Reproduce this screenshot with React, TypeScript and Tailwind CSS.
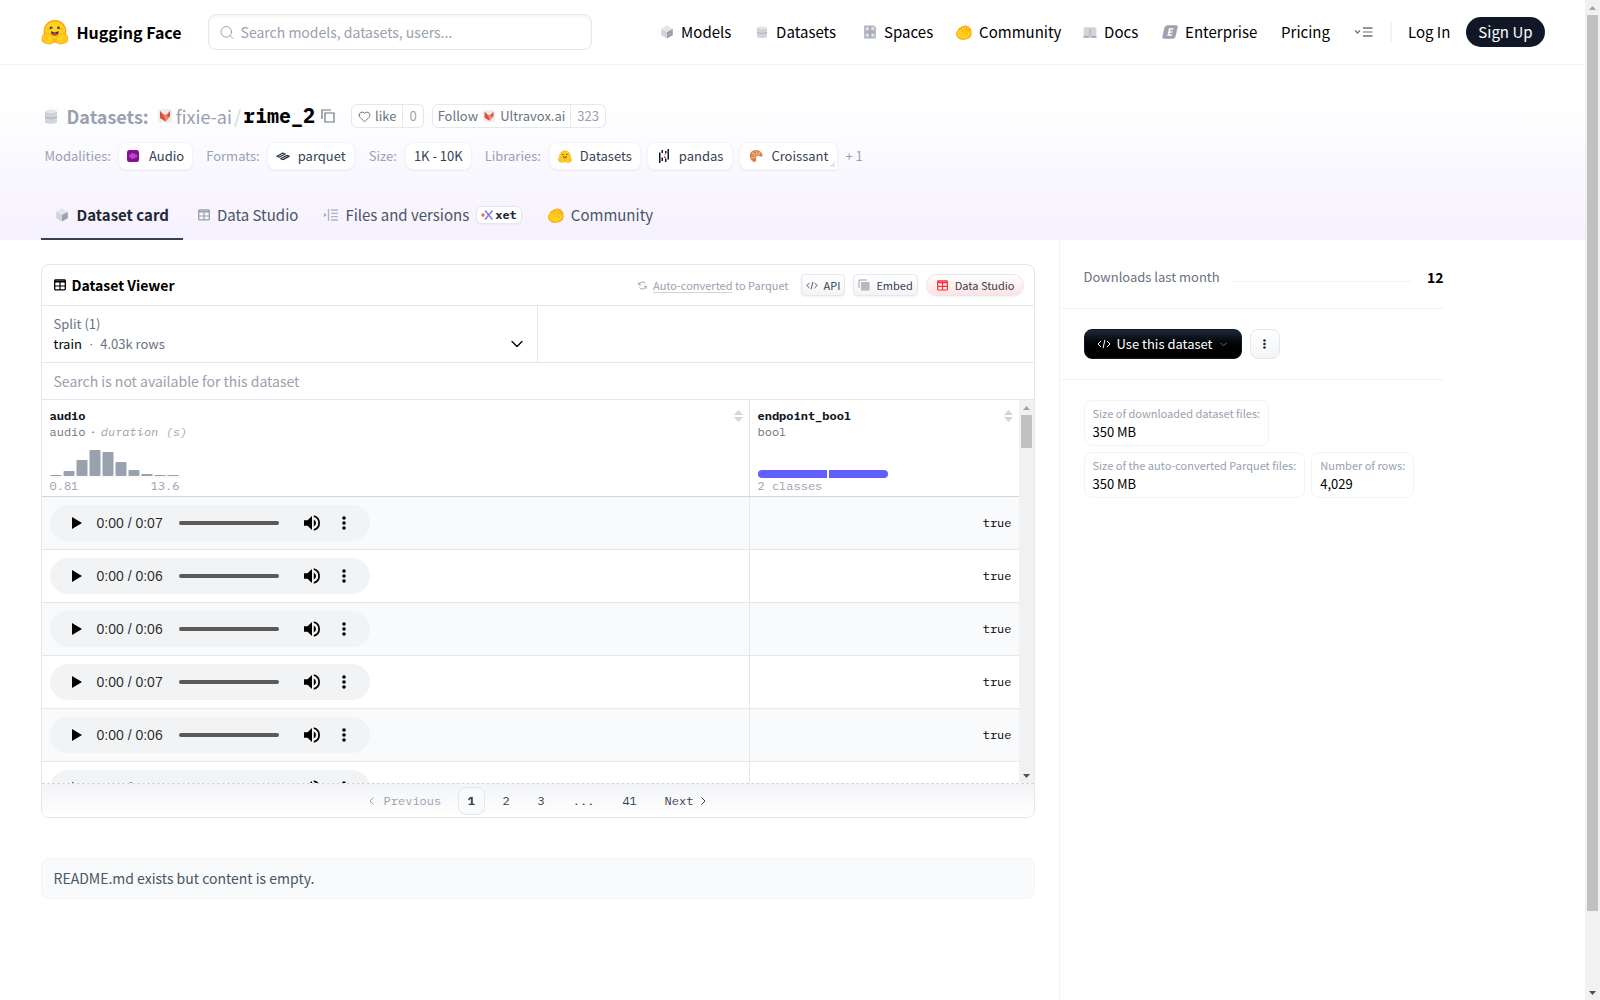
import React from 'react';
import { ChevronDown, Heart, Search } from 'lucide-react';

const MONO = "font-['IBM_Plex_Mono','Liberation_Mono',monospace]";

type IconProps = { className?: string };

const HuggingFace: React.FC<IconProps> = ({ className }) => {
  const hand =
    'M17.5 48c-1.6 0-3 .7-4 1.9a6 6 0 0 0-1.4 3.7 7 7 0 0 0-1.9-.3c-1.6 0-3 .6-4 1.7a5.8 5.8 0 0 0-.8 7 5.3 5.3 0 0 0-1.8 2.8c-.2.9-.5 2.8.8 4.7a5.2 5.2 0 0 0-.4 5c1 2.400 3.600 4.200 8.600 6.100 3 1.300 5.900 2 5.900 2a44 44 0 0 0 10.900 1.600c5.900 0 10-1.800 12.500-5.300 3.900-5.700 3.300-10.900-1.700-15.900-2.800-2.800-4.600-6.900-5-7.800-.8-2.700-2.900-5.600-6.300-5.600a5.700 5.700 0 0 0-4.600 2.500c-1-1.300-2-2.300-2.800-2.800A7.400 7.400 0 0 0 17.500 48Z';
  return (
    <svg className={className} viewBox="0 0 95 88" fill="none">
      <circle cx="47.2" cy="41.8" r="36.5" fill="#FFD21E" stroke="#FF9D0B" strokeWidth="4" />
      <path
        fill="#3A3B45"
        d="M58.5 32.300c1.280.44 1.780 3.060 3.070 2.380a5 5 0 1 0-6.760-2.070c.61 1.150 2.550-.72 3.700-.32ZM34.950 32.300c-1.280.44-1.790 3.060-3.070 2.380a5 5 0 1 1 6.760-2.070c-.61 1.150-2.560-.72-3.700-.32Z"
      />
      <path
        fill="#3A3B45"
        d="M46.960 56.290c9.830 0 13-8.760 13-13.260 0-2.340-1.570-1.600-4.090-.36-2.330 1.150-5.460 2.740-8.900 2.740-7.190 0-13-6.880-13-2.380s3.160 13.260 13 13.260Z"
      />
      <path fill="#F94040" d="M38 53a9.500 9.500 0 0 1 9-5c4 0 7.500 2 9 5-2.300 2.200-5.500 3.300-9 3.300S40.300 55.200 38 53Z" />
      <circle cx="70.700" cy="33.800" r="3.250" fill="#FF9D0B" />
      <circle cx="24.200" cy="33.800" r="3.250" fill="#FF9D0B" />
      <path d={hand} fill="#FFD21E" stroke="#FF9D0B" strokeWidth="3" />
      <path d="M15 56l6 9M9 63l10 8M9 71l8 4" stroke="#FF9D0B" strokeWidth="2" strokeLinecap="round" />
      <g transform="translate(94.400 0) scale(-1 1)">
        <path d={hand} fill="#FFD21E" stroke="#FF9D0B" strokeWidth="3" />
        <path d="M15 56l6 9M9 63l10 8M9 71l8 4" stroke="#FF9D0B" strokeWidth="2" strokeLinecap="round" />
      </g>
    </svg>
  );
};

const Cube: React.FC<IconProps> = ({ className }) => (
  <svg className={className} viewBox="0 0 24 24">
    <path fill="#E2E5EA" d="M12 1l10 5.500-10 5.500L2 6.500z" />
    <path fill="#D1D5DB" d="M2 6.500L12 12v11L2 17.500z" />
    <path fill="#9CA3AF" d="M22 6.500L12 12v11l10-5.500z" />
  </svg>
);

const Cylinder: React.FC<IconProps> = ({ className }) => (
  <svg className={className} viewBox="2 0 20 24">
    <path fill="#D1D5DB" d="M2 4v17q0 3 10 3t10-3V4z" />
    <path fill="none" stroke="#9CA3AF" strokeWidth="1.500" d="M2 12q3 3 10 3t10-3" />
    <ellipse cx="12" cy="4" rx="10" ry="3.500" fill="#E2E5EA" />
    <path fill="none" stroke="#B6BCC8" strokeWidth="1" d="M2 5q3 3 10 3t10-3" />
  </svg>
);

const SpacesIcon: React.FC<IconProps> = ({ className }) => (
  <svg className={className} viewBox="0 0 24 24">
    <path fill="#B1B5C4" d="M2 1h15a5.500 5.500 0 0 1 5 8v14H2z" />
    <g fill="#DDE0E6">
      <rect x="5" y="4" width="5" height="5" rx="1" />
      <circle cx="17" cy="6" r="3" />
      <rect x="5" y="15" width="5" height="5" rx="1" />
      <rect x="14.500" y="15" width="5" height="5" rx="1" />
    </g>
    <path stroke="#9BA1B2" d="M12 1v22M2 12h20" />
  </svg>
);

const Fist: React.FC<IconProps> = ({ className }) => (
  <svg className={className} viewBox="0 0 24 22">
    <path
      fill="#FFD21E"
      stroke="#FF9D0B"
      strokeWidth="1.600"
      strokeLinejoin="round"
      d="M2 17C0 13 1.500 9 4 7.500 3.500 5 6 4 7.500 5.200 7 2.500 10 1.500 11.500 3.500 12 .8 15 .5 16 3c2-1.500 4.300 0 3.800 2.500 2.300 0 3 2 2.200 4 1.500 4 0 8-5 10.500-5 2-12 1.500-15-3z"
    />
    <path
      fill="none"
      stroke="#FF9D0B"
      strokeWidth="1.300"
      strokeLinecap="round"
      d="M7.500 5.200l3 5M11.500 3.500l2.500 5.500M16 3l1 6M19.800 5.500L19 10M13 13c1.500-2 4-2 4.500 1"
    />
  </svg>
);

const Book: React.FC<IconProps> = ({ className }) => (
  <svg className={className} viewBox="0 0 24 22">
    <path fill="#9CA3AF" d="M1 17h22v3h-9l-2-1-2 1H1z" />
    <path fill="#D1D5DB" d="M1 3q7-3 11 0q4-3 11 0v15q-7-2-11 1Q8 16 1 18z" />
    <path stroke="#9CA3AF" strokeWidth="1.500" d="M12 4v13" />
  </svg>
);

const EnterpriseIcon: React.FC<IconProps> = ({ className }) => (
  <svg className={className} viewBox="0 0 24 20">
    <path fill="#9CA3AF" d="M8 0h13q3 0 2.500 3l-3 13q-1 4-4 4H3q-3 0-2.500-3l3-13Q4.500 0 8 0z" />
    <path fill="none" stroke="#fff" strokeWidth="2.400" d="M17 5.500h-5.500l-2 9H15M10.500 10h5" />
  </svg>
);

const MenuIcon: React.FC<IconProps> = ({ className }) => (
  <svg className={className} viewBox="0 0 20 12" fill="none">
    <path stroke="#6B7280" strokeWidth="1.300" d="M1 4.500l2.500 2.500L6 4.500M9 2h9.500M9 10h9.500" />
    <path stroke="#B1B5C4" strokeWidth="2" d="M9 6h9.500" />
  </svg>
);

const Fox: React.FC<IconProps> = ({ className }) => (
  <svg className={className} viewBox="0 0 14 14">
    <rect width="14" height="14" rx="2" fill="#F1EDED" />
    <path fill="#F2876F" d="M2 2l4 3.500h2.500L12 2v6l-4.500 4.500L2 9z" />
    <path fill="#D9503F" d="M2 2l4 5 2 5.500L2 9zM12 2L8.500 7l3.500 1z" />
  </svg>
);

const CopyIcon: React.FC<IconProps> = ({ className }) => (
  <svg className={className} viewBox="0 0 14 14" fill="none" stroke="currentColor" strokeWidth="1.200">
    <path d="M4 4h9v9H4zM1 10V1h9" />
  </svg>
);

const TableIcon: React.FC<IconProps> = ({ className }) => (
  <svg className={className} viewBox="0 0 12 12" fill="none" stroke="currentColor">
    <rect x=".7" y=".9" width="10.600" height="10" rx=".8" strokeWidth="1.300" />
    <path strokeWidth="1.200" d="M6 2.500V11M.8 7h10.500" />
    <path strokeWidth="2" d="M.8 2.500h10.500" />
  </svg>
);

const FilesIcon: React.FC<IconProps> = ({ className }) => (
  <svg className={className} viewBox="0 0 14 12" fill="none">
    <path fill="#9CA3AF" d="M0 4l2.500 2L0 8z" />
    <path stroke="#B1B5C4" strokeWidth="1.300" d="M4.500 0v12M7 1h7M7 4.300h7M7 7.600h7M7 11h7" />
  </svg>
);

const XetIcon: React.FC<IconProps> = ({ className }) => (
  <svg className={className} viewBox="0 0 12 10" fill="none" strokeLinecap="round">
    <path fill="#FF6B4A" d="M0 5l2-2.300L4 5 2 7.300z" />
    <path stroke="#7C6CF5" strokeWidth="1.500" strokeDasharray="2 1" d="M4.500 1L7 4.200h1.500L11 1M4.500 9L7 5.800h1.500L11 9" />
  </svg>
);

const AudioIcon: React.FC<IconProps> = ({ className }) => (
  <svg className={className} viewBox="0 0 12 12">
    <rect width="12" height="12" rx="2.500" fill="#8A0A9A" />
    <path stroke="#E3A6EA" strokeWidth=".9" strokeLinecap="round" d="M3 5v2M5 3.500v5M7 4v4M9 5v2" />
  </svg>
);

const ParquetIcon: React.FC<IconProps> = ({ className }) => (
  <svg className={className} viewBox="0 0 14 10" fill="none" stroke="#27303F" strokeWidth="1.200">
    <path d="M.5 5.500L7 2M3 6.200l6.500-3.400M4.500 7.800L11 4.400M7 8.600l6.500-3.500M.5 5l2.700 1.300M6.500 2l3 1M4.300 7.500L7 8.700M10.800 4.200l2.700 1" />
  </svg>
);

const PandasIcon: React.FC<IconProps> = ({ className }) => (
  <svg className={className} viewBox="0 0 12 14">
    <path fill="#130754" d="M3.500 1h1.500v3H3.500zM3.500 8.500h1.500v3.500H3.500z" />
    <path fill="#111827" d="M1 3.500h1.500V14H1zM9.500 0H11v10.500H9.500zM7 2h1.500v2.500H7zM7 9.500h1.500V13H7z" />
    <path fill="#FFCA00" d="M6 5h1.500v1.500H6z" />
    <path fill="#E70488" d="M6 7.500h1.500V9H6z" />
  </svg>
);

const Croissant: React.FC<IconProps> = ({ className }) => (
  <svg className={className} viewBox="0 0 14 14">
    <path fill="#D9844F" d="M1 8C0 4 3 1 7 1c3 0 6 2 6.500 5 .3 1.500-1 2-2 1.500C10 6.500 7.500 6 7 8c-.3 1.500.5 2.500 0 4-.4 1.300-2 1.300-3 .6C2.300 11.500 1.300 10 1 8z" />
    <path fill="none" stroke="#F4BD83" strokeWidth="1.200" d="M3 3.500l3.500 3M7.500 1.500l.5 4M2 9l4-1M11 3L9.500 6" />
  </svg>
);

const CodeIcon: React.FC<IconProps> = ({ className }) => (
  <svg className={className} viewBox="0 0 14 10" fill="none" stroke="currentColor" strokeWidth="1">
    <path d="M4 2L1 5l3 3M10 2l3 3-3 3M8 .8L6 9.200" />
  </svg>
);

const RefreshIcon: React.FC<IconProps> = ({ className }) => (
  <svg className={className} viewBox="0 0 12 12" fill="none" stroke="currentColor" strokeWidth="1.200">
    <path d="M1.500 5A4.600 4.600 0 0 1 10 3.500M10.500 7A4.600 4.600 0 0 1 2 8.500M1 1.500V5h3M11 10.500V7H8" />
  </svg>
);

const EmbedIcon: React.FC<IconProps> = ({ className }) => (
  <svg className={className} viewBox="0 0 12 12">
    <rect x="3" y="3" width="8.500" height="8.500" fill="#B4B9C2" />
    <path fill="none" stroke="#9CA3AF" d="M1 9V1h8" />
  </svg>
);

const SortIcon: React.FC = () => (
  <svg className="h-3 w-[9px]" viewBox="0 0 9 12" fill="#D1D5DB">
    <path d="M4.500 0L9 5H0zM4.500 12L9 7H0z" />
  </svg>
);

const Kebab: React.FC<IconProps> = ({ className }) => (
  <svg className={className} viewBox="0 0 4 14" fill="currentColor">
    <circle cx="2" cy="2" r="1.800" />
    <circle cx="2" cy="7" r="1.800" />
    <circle cx="2" cy="12" r="1.800" />
  </svg>
);

const Scrollbar: React.FC<{ thumb: string }> = ({ thumb }) => (
  <div className="flex w-[15px] shrink-0 flex-col items-center bg-[#f1f1f1]" aria-hidden="true">
    <div className="flex h-[15px] items-center">
      <svg className="h-1 w-[7px]" viewBox="0 0 7 4"><path fill="#A3A3A3" d="M3.500 0L7 4H0z" /></svg>
    </div>
    <div className="w-full flex-1 px-0.5">
      <div className={`${thumb} bg-[#c1c1c1]`} />
    </div>
    <div className="flex h-[15px] items-center">
      <svg className="h-1 w-[7px]" viewBox="0 0 7 4"><path fill="#505050" d="M3.500 4L7 0H0z" /></svg>
    </div>
  </div>
);

const navLinks = [
  { label: 'Models', icon: <Cube className="h-[14px] w-[14px]" />, space: 'w-[95px]' },
  { label: 'Datasets', icon: <Cylinder className="h-3 w-[14px]" />, space: 'w-[108px]' },
  { label: 'Spaces', icon: <SpacesIcon className="h-[14px] w-[14px]" />, space: 'w-[93px]' },
  { label: 'Community', icon: <Fist className="h-[15px] w-4" />, space: 'w-[127px]' },
  { label: 'Docs', icon: <Book className="h-[13px] w-[14px]" />, space: 'w-[79px]' },
  { label: 'Enterprise', icon: <EnterpriseIcon className="h-[14px] w-4" />, space: 'w-[119px]' },
];

const NavBar: React.FC = () => (
  <header className="border-b border-gray-100">
    <div className="mx-auto flex h-16 max-w-[1536px] items-center px-4">
      <a href="#" className="flex items-center gap-2 text-[16px] font-bold whitespace-nowrap">
        <HuggingFace className="h-[26px] w-7" />
        Hugging Face
      </a>
      <label className="ml-[26px] flex h-9 w-96 items-center gap-1.5 rounded-lg border border-gray-200 px-2.5 shadow-[inset_0_2px_4px_rgba(0,0,0,0.04)]">
        <Search size={17} strokeWidth={1.5} className="text-gray-400" />
        <input
          type="search"
          aria-label="Search models, datasets, users"
          placeholder="Search models, datasets, users..."
          className="w-full bg-transparent text-[14px] outline-none placeholder:text-gray-400"
        />
      </label>
      <nav className="ml-auto flex items-center text-[15px] whitespace-nowrap">
        {navLinks.map((link) => (
          <a key={link.label} href="#" className={`${link.space} flex items-center gap-[7px]`}>
            {link.icon}
            {link.label}
          </a>
        ))}
        <a href="#">Pricing</a>
        <button aria-label="More" className="ml-6"><MenuIcon className="h-3 w-5" /></button>
        <span className="ml-4 h-5 w-0.5 bg-gray-100" />
        <a href="#" className="ml-4">Log In</a>
        <button className="ml-4 h-[30px] rounded-full bg-gray-900 px-3 text-white">Sign Up</button>
      </nav>
    </div>
  </header>
);

const Chip: React.FC<{ icon?: React.ReactNode; children: React.ReactNode; className?: string }> = ({
  icon,
  children,
  className = 'rounded-lg px-2',
}) => (
  <a
    href="#"
    className={`${className} relative flex h-7 items-center gap-2 border border-gray-100 bg-white text-gray-700 shadow-xs`}
  >
    {icon}
    {children}
  </a>
);

const tabs = [
  { label: 'Data Studio', icon: <TableIcon className="h-3 w-3 text-gray-400" /> },
  { label: 'Files and versions', icon: <FilesIcon className="h-3 w-[14px]" />, xet: true },
  { label: 'Community', icon: <Fist className="h-[15px] w-4" /> },
];

const DatasetHeader: React.FC = () => (
  <section className="bg-linear-to-b from-white via-white via-20% to-[#f5f1ff]">
    <div className="mx-auto h-[175px] max-w-[1536px] px-4 pt-[38px] whitespace-nowrap">
      <div className="flex items-center">
        <h1 className="flex h-[26px] items-center text-[18px]">
          <Cylinder className="mr-2.5 ml-1 h-[15px] w-3" />
          <span className="font-semibold text-gray-400">Datasets:</span>
          <Fox className="ml-[9px] h-[14px] w-[14px]" />
          <a href="#" className="ml-1 text-gray-400">fixie-ai</a>
          <span className="mx-0.5 text-gray-300">/</span>
          <a href="#" className={`${MONO} text-[20px] font-bold`}>rime_2</a>
          <button aria-label="Copy dataset name" className="ml-1.5">
            <CopyIcon className="h-[14px] w-[14px] text-gray-500" />
          </button>
        </h1>
        <div className="ml-4 flex h-6 items-center rounded-md border border-gray-200 bg-white text-[13px] text-gray-500">
          <button className="flex h-full items-center gap-1 border-r border-gray-200 px-1.5">
            <Heart size={13} strokeWidth={1.8} />
            like
          </button>
          <button className="px-1.5 text-gray-400">0</button>
        </div>
        <div className="ml-2 flex h-6 items-center rounded-md border border-gray-200 bg-white text-[13px] text-gray-500">
          <button className="flex h-full items-center gap-[5px] border-r border-gray-200 px-[5px]">
            Follow
            <Fox className="h-3 w-3" />
            Ultravox.ai
          </button>
          <button className="px-1.5 text-gray-400">323</button>
        </div>
      </div>
      <div className="mt-[13px] flex items-center text-[13px] text-gray-400">
        <span className="mr-[7px] ml-1">Modalities:</span>
        <Chip icon={<AudioIcon className="mr-0.5 h-3 w-3" />}>Audio</Chip>
        <span className="mr-[7px] ml-[13px]">Formats:</span>
        <Chip icon={<ParquetIcon className="h-[10px] w-[14px]" />}>parquet</Chip>
        <span className="mr-2 ml-[14px]">Size:</span>
        <Chip>1K - 10K</Chip>
        <span className="mr-2 ml-[13px]">Libraries:</span>
        <div className="flex items-center gap-1.5">
          <Chip icon={<HuggingFace className="h-[13px] w-[14px]" />}>Datasets</Chip>
          <Chip icon={<PandasIcon className="h-[14px] w-[14px]" />} className="rounded-lg px-[9px]">pandas</Chip>
          <Chip icon={<Croissant className="h-[14px] w-[14px]" />} className="rounded-t-lg rounded-bl-lg px-[9px]">
            Croissant
            <svg className="absolute right-0.5 bottom-0.5 h-1.5 w-1.5" viewBox="0 0 6 6">
              <path fill="#E5E7EB" d="M6 0v6H0z" />
            </svg>
          </Chip>
        </div>
        <a href="#" className="ml-[7px]">+ 1</a>
      </div>
      <nav className="mt-[22px] flex h-12 items-stretch text-[15px] text-gray-600">
        <a href="#" className="mr-0.5 flex items-center gap-2 border-b-2 border-gray-700 px-[14px] font-bold text-gray-800">
          <Cube className="h-[14px] w-[14px]" />
          Dataset card
        </a>
        {tabs.map((tab) => (
          <a key={tab.label} href="#" className="flex items-center gap-[7px] border-b-2 border-transparent px-[13px]">
            {tab.icon}
            {tab.label}
            {tab.xet && (
              <span className={`${MONO} flex h-[18px] items-center gap-0.5 rounded-md border border-gray-200 bg-white px-1 text-[12px] font-bold text-gray-800 shadow-xs`}>
                <XetIcon className="h-[10px] w-3" />
                xet
              </span>
            )}
          </a>
        ))}
      </nav>
    </div>
  </section>
);

const durations = ['0:07', '0:06', '0:06', '0:07', '0:06', '0:06'];
const histogram = [1, 5, 16, 26, 24, 14, 6, 2, 1, 1];

const AudioPlayer: React.FC<{ duration: string }> = ({ duration }) => (
  <div className="flex h-9 w-80 items-center rounded-full bg-[#f1f3f4] pl-[22px] font-['Liberation_Sans',sans-serif] text-[14px] text-black">
    <button aria-label="Play">
      <svg className="h-3 w-[10px]" viewBox="0 0 10 12"><path d="M0 0l10 6-10 6z" /></svg>
    </button>
    <span className="ml-[15px] w-[82px] text-black/85">0:00 / {duration}</span>
    <input
      type="range"
      defaultValue={0}
      aria-label="Seek"
      className="h-1 w-[100px] appearance-none rounded-full bg-[#5a5a5a] [&::-webkit-slider-thumb]:appearance-none"
    />
    <button aria-label="Mute" className="ml-[25px]">
      <svg className="h-4 w-4" viewBox="3 3 18 18">
        <path d="M3 9v6h4l5 5V4L7 9H3zm13.500 3A4.500 4.500 0 0 0 14 7.970v8.050A4.500 4.500 0 0 0 16.500 12zM14 3.230v2.060a7 7 0 0 1 0 13.420v2.060a9 9 0 0 0 0-17.540z" />
      </svg>
    </button>
    <button aria-label="More options" className="ml-[22px]"><Kebab className="h-[14px] w-1" /></button>
  </div>
);

const DataTable: React.FC = () => (
  <div className="flex h-[383px]">
    <div className="flex-1 overflow-hidden">
      <table className={`${MONO} w-full table-fixed border-separate border-spacing-0 text-[12px] leading-4`}>
        <thead>
          <tr className="h-[97px] text-left align-top font-normal">
            <th scope="col" className="border-r border-b border-gray-200 border-b-gray-300 pt-2 pr-[6px] pl-2 font-normal">
              <div className="flex items-center justify-between">
                <span className="font-bold text-gray-900">audio</span>
                <SortIcon />
              </div>
              <div className="text-gray-500">
                audio<span className="mx-1">·</span><i className="text-gray-400">duration (s)</i>
              </div>
              <svg className="mt-2.5 h-7 w-[130px]" viewBox="0 0 130 28">
                {histogram.map((h, i) => (
                  <rect key={i} x={i * 13 + 0.5} y={26 - h} width="11" height={h} rx={h > 3 ? 1 : 0} fill="#99A1AF" />
                ))}
                <path stroke="#F3F4F6" d="M0 27h130" />
              </svg>
              <div className="flex w-[130px] justify-between text-gray-400">
                <span>0.81</span>
                <span>13.6</span>
              </div>
            </th>
            <th scope="col" className="w-[269px] border-b border-gray-300 pt-2 pr-[6px] pl-2 font-normal">
              <div className="flex items-center justify-between">
                <span className="font-bold text-gray-900">endpoint_bool</span>
                <SortIcon />
              </div>
              <div className="text-gray-500">bool</div>
              <div className="mt-[30px] flex h-2 w-[130px] gap-0.5">
                <span className="w-[69px] rounded-l bg-[#615fff]" />
                <span className="flex-1 rounded-r bg-[#615fff]" />
              </div>
              <div className="text-gray-400">2 classes</div>
            </th>
          </tr>
        </thead>
        <tbody>
          {durations.map((duration, i) => (
            <tr key={i} className="h-[53px] odd:bg-gray-50">
              <td className="border-r border-b border-gray-200 px-2"><AudioPlayer duration={duration} /></td>
              <td className="border-b border-gray-200 pr-[7px] text-right">true</td>
            </tr>
          ))}
        </tbody>
      </table>
    </div>
    <Scrollbar thumb="h-[33px]" />
  </div>
);

const smallButton = 'flex h-[22px] items-center border border-gray-200 bg-linear-to-b from-white shadow-xs';

const DatasetViewer: React.FC = () => (
  <section className="overflow-hidden rounded-lg border border-gray-200">
    <div className="flex h-[41px] items-center border-b border-gray-200 pr-[10px] pl-3 text-[11px] text-gray-700">
      <h2 className="mr-auto flex items-center gap-1.5 text-[14px] font-bold text-black">
        <TableIcon className="h-3 w-3" />
        Dataset Viewer
      </h2>
      <RefreshIcon className="mr-1.5 h-[9px] w-[9px] text-gray-400" />
      <span className="mr-3 text-gray-400">
        <a href="#" className="underline decoration-gray-300 underline-offset-2">Auto-converted</a> to Parquet
      </span>
      <button className={`${smallButton} mr-2 gap-1.5 rounded to-gray-100 px-1`}>
        <CodeIcon className="h-[9px] w-3" />
        API
      </button>
      <button className={`${smallButton} mr-2 gap-1.5 rounded to-gray-100 px-1`}>
        <EmbedIcon className="h-3 w-3" />
        Embed
      </button>
      <button className={`${smallButton} gap-[7px] rounded-full to-red-100 px-2`}>
        <TableIcon className="ml-0.5 h-[11px] w-[11px] text-red-500" />
        Data Studio
      </button>
    </div>
    <div className="grid h-[57px] grid-cols-2 border-b border-gray-200 text-[13px] leading-5">
      <button className="flex flex-col justify-center border-r border-gray-200 px-3 text-left text-gray-500">
        <span>Split (1)</span>
        <span className="flex w-full items-center gap-[7px]">
          <span className="text-black">train</span>
          <span className="font-['Liberation_Sans',sans-serif]">·</span>
          <span>4.03k rows</span>
          <ChevronDown size={20} strokeWidth={1.5} className="-mr-0.5 ml-auto text-black" />
        </span>
      </button>
    </div>
    <div className="flex h-[37px] items-center border-b border-gray-200 px-3 text-[14px] text-gray-400">
      Search is not available for this dataset
    </div>
    <DataTable />
    <nav className={`${MONO} flex h-[34px] items-center justify-center border-t border-dashed border-gray-300 bg-linear-to-b from-gray-100 to-white text-[12px] text-gray-700`}>
      <button disabled className="flex w-[89px] items-center gap-[10px] text-gray-400">
        <svg className="h-2 w-[5px]" viewBox="0 0 5 8" fill="none" stroke="currentColor"><path d="M4.500 .5L1 4l3.500 3.500" /></svg>
        Previous
      </button>
      <button className="h-7 w-[27px] rounded-lg border border-gray-200 bg-gray-50 font-bold">1</button>
      <button className="w-[43px]">2</button>
      <button className="w-[27px]">3</button>
      <span className="w-[58px] text-center">...</span>
      <button className="w-[34px]">41</button>
      <button className="ml-[18px] flex items-center gap-2">
        Next
        <svg className="h-2 w-[5px]" viewBox="0 0 5 8" fill="none" stroke="currentColor"><path d="M.5 .5L4 4 .5 7.500" /></svg>
      </button>
    </nav>
  </section>
);

const StatCard: React.FC<{ label: string; value: string }> = ({ label, value }) => (
  <div className="rounded-lg border border-gray-100 px-2 py-[3px]">
    <p className="text-[11px] leading-[18px] text-gray-400">{label}</p>
    <p className="text-[13px] leading-5">{value}</p>
  </div>
);

const Sidebar: React.FC = () => (
  <aside className="flex-1 border-l border-gray-100">
    <div className="max-w-96">
      <div className="flex h-[69px] items-center border-b border-gray-100 pt-1.5 pl-6">
        <span className="text-[13px] text-gray-500">Downloads last month</span>
        <span className="mr-4 ml-3 mt-2 flex-1 border-b border-dotted border-gray-200" />
        <span className="text-[14px] font-bold">12</span>
      </div>
      <div className="flex h-[71px] items-center gap-2 border-b border-gray-100 pl-6">
        <button className="flex h-[30px] items-center rounded-lg border border-gray-900 bg-linear-to-b from-gray-800 to-black to-80% px-3 text-[13px] text-white">
          <CodeIcon className="mr-1.5 h-[10px] w-[14px]" />
          Use this dataset
          <ChevronDown size={11} className="ml-[5px] text-gray-500" />
        </button>
        <button aria-label="More" className="flex h-[30px] w-[30px] items-center justify-center rounded-lg border border-gray-200 bg-linear-to-b from-white to-gray-100 text-gray-800">
          <Kebab className="h-[10px] w-[3px]" />
        </button>
      </div>
      <div className="flex flex-wrap gap-1.5 pt-5 pl-6">
        <StatCard label="Size of downloaded dataset files:" value="350 MB" />
        <StatCard label="Size of the auto-converted Parquet files:" value="350 MB" />
        <StatCard label="Number of rows:" value="4,029" />
      </div>
    </div>
  </aside>
);

export default function App() {
  return (
    <div className="flex h-screen overflow-hidden bg-white font-['Source_Sans_Pro','Noto_Sans_CJK_SC',sans-serif] leading-5 text-black">
      <div className="flex flex-1 flex-col">
        <NavBar />
        <DatasetHeader />
        <div className="mx-auto flex w-full max-w-[1536px] flex-1 px-4">
          <main className="w-[1018px] shrink-0 pt-6 pr-6">
            <DatasetViewer />
            <p className="mt-10 rounded-lg border border-gray-100 bg-gray-50 px-3 py-[9px] text-[14px] leading-[21px] text-gray-600">
              README.md exists but content is empty.
            </p>
          </main>
          <Sidebar />
        </div>
      </div>
      <Scrollbar thumb="h-[896px]" />
    </div>
  );
}
